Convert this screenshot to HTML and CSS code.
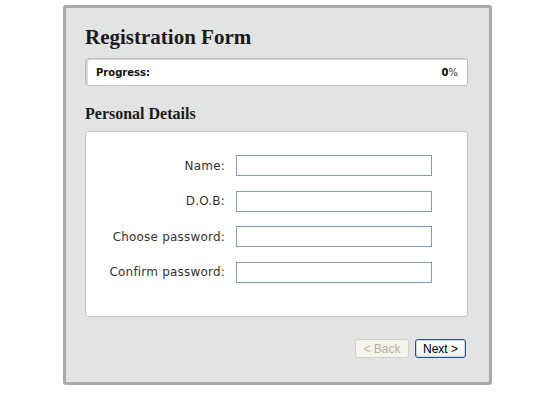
FILE: index.html
```html
<!DOCTYPE html>
<html>
<head>
<meta charset="utf-8">
<link rel="stylesheet" href="styles.css">
</head>
<body>
<div class="wizard">
  <h1 class="title">Registration Form</h1>
  <div class="progress">
    <span class="progress-label">Progress:</span>
    <span class="progress-value"><b>0</b>%</span>
  </div>
  <h2 class="section">Personal Details</h2>
  <div class="fieldset">
    <div class="row"><label class="label">Name:</label><span class="input"></span></div>
    <div class="row"><label class="label">D.O.B:</label><span class="input"></span></div>
    <div class="row"><label class="label">Choose password:</label><span class="input"></span></div>
    <div class="row"><label class="label">Confirm password:</label><span class="input"></span></div>
  </div>
  <div class="buttons">
    <span class="btn btn-disabled">&lt; Back</span>
    <span class="btn btn-next">Next &gt;</span>
  </div>
</div>
</body>
</html>
```
FILE: styles.css
```css
html, body {
  margin: 0;
  padding: 0;
  background: #ffffff;
}
.wizard {
  box-sizing: border-box;
  margin: 5px 0 0 63px;
  width: 429px;
  height: 380px;
  border: 3px solid #a9a9a9;
  border-radius: 3px;
  background: #e2e3e3;
  padding: 0 21px 0 19px;
  display: flex;
  flex-direction: column;
}
.title {
  margin: 15px 0 0 0;
  font-family: "Liberation Serif", serif;
  font-weight: bold;
  font-size: 21px;
  line-height: 28px;
  color: #1a1a1a;
}
.progress {
  box-sizing: border-box;
  margin-top: 7px;
  height: 28px;
  background: #ffffff;
  border: 1px solid #bdbdbd;
  border-radius: 3px;
  box-shadow: inset 2px 1px 0 #d8d8d8;
  display: flex;
  align-items: center;
  justify-content: space-between;
  padding: 0 9px 0 10px;
  font-family: "DejaVu Sans", Verdana, sans-serif;
  font-size: 10px;
  color: #111;
}
.progress-label {
  font-weight: bold;
}
.progress-value {
  color: #333;
}
.progress-value b {
  color: #000;
}
.section {
  margin: 18px 0 0 0;
  font-family: "Liberation Serif", serif;
  font-weight: bold;
  font-size: 16px;
  line-height: 20px;
  color: #1a1a1a;
}
.fieldset {
  box-sizing: border-box;
  margin-top: 7px;
  height: 186px;
  background: #ffffff;
  border: 1px solid #c3c3c3;
  border-radius: 3px;
  padding: 23px 0 0 0;
  display: flex;
  flex-direction: column;
  gap: 14.5px;
}
.row {
  display: flex;
  align-items: center;
  height: 21px;
}
.label {
  width: 139px;
  text-align: right;
  font-family: "DejaVu Sans", Verdana, sans-serif;
  font-size: 12px;
  letter-spacing: 0.2px;
  color: #333;
}
.input {
  box-sizing: border-box;
  margin-left: 11px;
  width: 196px;
  height: 21px;
  border: 1px solid #7f9db9;
  background: #fff;
}
.buttons {
  margin-top: 22px;
  display: flex;
  justify-content: flex-end;
  gap: 6px;
  padding-right: 2px;
}
.btn {
  box-sizing: border-box;
  height: 19px;
  display: flex;
  align-items: center;
  justify-content: center;
  font-family: "Liberation Sans", Arial, sans-serif;
  font-size: 12px;
  border-radius: 3px;
}
.btn-disabled {
  width: 54px;
  background: #f4f3ec;
  border: 1px solid #d2d0c4;
  color: #b3b0a4;
}
.btn-next {
  width: 51px;
  background: linear-gradient(#ffffff, #f0f0ea);
  border: 1px solid #2c4f78;
  color: #000;
  box-shadow: inset 0 0 0 1px #c8d6ec;
}
```
